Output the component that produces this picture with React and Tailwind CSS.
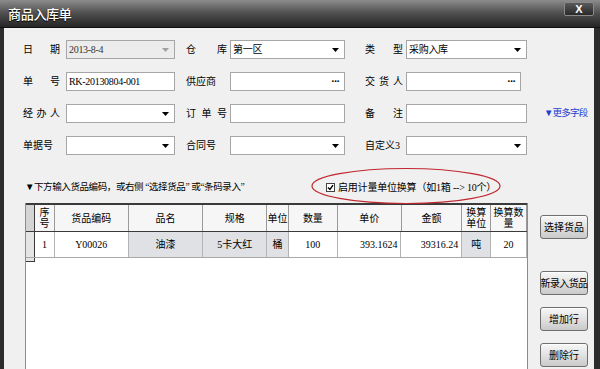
import React from 'react';

const FONT = { fontFamily: "'Liberation Serif', 'Noto Sans CJK SC', serif" };

const Arrow = ({ color = '#000' }) => (
  <svg width="7" height="4" viewBox="0 0 7 4" className="shrink-0">
    <path d="M0 0 L7 0 L3.5 4 Z" fill={color} />
  </svg>
);

const Dots = () => <span className="text-[11px] leading-none tracking-[-1px] font-bold text-black">···</span>;

const Field = ({ w, value = '', kind = 'input', disabled = false }) => (
  <div
    className={`h-[19px] flex items-center justify-between border border-[#a6a6a6] pl-[2px] pr-[5px] text-[10px] ${
      disabled ? 'bg-[#ececec] text-[#333]' : 'bg-white text-black'
    }`}
    style={{ width: w }}
  >
    <span className="whitespace-nowrap tracking-[-0.3px]">{value}</span>
    {kind === 'select' && <Arrow color={disabled ? '#a0a0a0' : '#000'} />}
    {kind === 'dots' && <Dots />}
  </div>
);

const Label = ({ text, w, spread = false }) => (
  <div
    className={`text-[10px] text-black flex whitespace-nowrap ${spread ? 'justify-between' : ''}`}
    style={{ width: w }}
  >
    {spread ? text.split('').map((c, i) => <span key={i}>{c}</span>) : text}
  </div>
);

const FormRow = ({ a, b, c, extra }) => (
  <div className="flex items-center h-[19px] pl-[19px]">
    <Label {...a.label} w={37} />
    <div className="w-[6px]" />
    <Field w={109} {...a.field} />
    <div className="w-[11px]" />
    <Label {...b.label} w={41} />
    <div className="w-[3px]" />
    <Field w={115} {...b.field} />
    <div className="w-[20px]" />
    <Label {...c.label} w={38} />
    <div className="w-[3px]" />
    <Field w={c.w || 121} {...c.field} />
    {extra}
  </div>
);

const cols = [
  { w: 9, h: '', v: '', sel: true },
  { w: 20, h: '序\n号', v: '1' },
  { w: 74, h: '货品编码', v: 'Y00026' },
  { w: 75, h: '品名', v: '油漆', gray: true },
  { w: 64, h: '规格', v: '5卡大红', gray: true },
  { w: 22, h: '单位', v: '桶', gray: true },
  { w: 49, h: '数量', v: '100' },
  { w: 64, h: '单价', v: '393.1624', right: true },
  { w: 61, h: '金额', v: '39316.24', right: true },
  { w: 29, h: '换算\n单位', v: '吨', gray: true },
  { w: 36, h: '换算数\n量', v: '20' },
];

const Btn = ({ children, className = '' }) => (
  <div
    className={`w-[48px] h-[24px] flex items-center justify-center rounded-[3px] border border-[#6f6f6f] bg-gradient-to-b from-[#f7f7f7] via-[#e2e2e2] to-[#c9c9c9] text-[10px] text-black whitespace-nowrap shadow-[inset_0_1px_0_#ffffff] ${className}`}
  >
    {children}
  </div>
);

export default function App() {
  return (
    <div className="w-[600px] h-[369px] overflow-hidden bg-[#2c2c2c] flex flex-col" style={FONT}>
      {/* title bar */}
      <div className="h-[28px] shrink-0 flex items-center justify-between pl-[8px] pr-[6px] bg-gradient-to-b from-[#8c8c8c] via-[#4e4e4e] to-[#262626] border-b border-[#111]">
        <span className="text-white text-[13px] font-medium tracking-[-0.3px] [text-shadow:0_1px_1px_#000]" style={{ fontFamily: "'Noto Sans CJK SC', sans-serif" }}>
          商品入库单
        </span>
        <div className="self-start mt-[2px] w-[30px] h-[14px] flex items-center justify-center bg-gradient-to-b from-[#5a5a5a] to-[#2a2a2a] border border-[#8a8a8a] rounded-[2px] text-white text-[11px] font-bold leading-none" style={{ fontFamily: "'Liberation Sans', sans-serif" }}>
          X
        </div>
      </div>

      {/* body */}
      <div className="flex-1 ml-[4px] mr-[6px] bg-[#f0f0f0] relative flex flex-col">
        <div className="pt-[12px] flex flex-col gap-[13px]">
          <FormRow
            a={{ label: { text: '日期', spread: true }, field: { value: '2013-8-4', kind: 'select', disabled: true } }}
            b={{ label: { text: '仓库', spread: true }, field: { value: '第一区', kind: 'select' } }}
            c={{ label: { text: '类型', spread: true }, field: { value: '采购入库', kind: 'select' } }}
          />
          <FormRow
            a={{ label: { text: '单号', spread: true }, field: { value: 'RK-20130804-001' } }}
            b={{ label: { text: '供应商' }, field: { kind: 'dots' } }}
            c={{ label: { text: '交货人', spread: true }, field: { kind: 'dots' }, w: 115 }}
          />
          <FormRow
            a={{ label: { text: '经办人', spread: true }, field: { kind: 'select' } }}
            b={{ label: { text: '订单号', spread: true }, field: {} }}
            c={{ label: { text: '备注', spread: true }, field: {} }}
            extra={<span className="ml-[17px] text-[9.5px] tracking-[-0.8px] text-[#1f3fd0] whitespace-nowrap">▼更多字段</span>}
          />
          <FormRow
            a={{ label: { text: '单据号' }, field: { kind: 'select' } }}
            b={{ label: { text: '合同号' }, field: { kind: 'select' } }}
            c={{ label: { text: '自定义3' }, field: { kind: 'select' } }}
          />
        </div>

        {/* hint row */}
        <div className="mt-[25px] flex items-center h-[14px] pl-[21px] text-[10px] text-black">
          <div className="w-[301px] whitespace-nowrap text-[9.5px] tracking-[-0.4px]">▼下方输入货品编码，或右侧 “选择货品” 或“条码录入”</div>
          <div className="w-[9px] h-[9px] border border-[#444] bg-white flex items-center justify-center">
            <svg width="7" height="7" viewBox="0 0 7 7">
              <path d="M1 3.5 L3 5.5 L6 1.2" stroke="#000" strokeWidth="1.4" fill="none" />
            </svg>
          </div>
          <span className="ml-[3px] whitespace-nowrap tracking-[-0.2px]">启用计量单位换算（如1箱 --&gt; 10个）</span>
        </div>
        <svg className="absolute left-[306px] top-[139px]" width="192" height="38" viewBox="0 0 192 38">
          <ellipse cx="96" cy="19" rx="94" ry="17.5" fill="none" stroke="#c2262e" strokeWidth="1.2" />
        </svg>

        {/* table + buttons */}
        <div className="mt-[9px] flex flex-1">
          <div className="ml-[21px] w-[503px] bg-white border-l border-r border-[#8c8c8c] flex flex-col">
            <div className="flex h-[29px] border-t-2 border-b border-[#3a3a3a] bg-[#f6f6f6]">
              {cols.map((c, i) => (
                <div
                  key={i}
                  className={`h-full flex items-center justify-center text-center whitespace-pre text-[10px] leading-[11px] text-black border-r ${
                    c.sel ? 'bg-[#d4d4d4] border-[#3a3a3a]' : 'border-[#9a9a9a]'
                  }`}
                  style={{ width: c.w }}
                >
                  {c.h}
                </div>
              ))}
            </div>
            <div className="flex h-[26px] border-b border-[#a8a8a8]">
              {cols.map((c, i) => (
                <div
                  key={i}
                  className={`h-full flex items-center text-[10px] text-black whitespace-nowrap border-r ${
                    c.right ? 'justify-end pr-[3px]' : 'justify-center'
                  } ${c.sel ? 'bg-[#e4e4e4] border-[#3a3a3a]' : 'border-[#b4b4b4]'} ${c.gray ? 'bg-[#dfe1e4]' : ''}`}
                  style={{ width: c.w }}
                >
                  {c.v}
                </div>
              ))}
            </div>
            <div className="w-[9px] h-[4px] border-r border-b border-[#3a3a3a] bg-[#e4e4e4]" />
          </div>

          <div className="ml-[12px] pt-[12px] flex flex-col">
            <Btn>选择货品</Btn>
            <Btn className="mt-[32px] tracking-[-0.6px]">新录入货品</Btn>
            <Btn className="mt-[12px]">增加行</Btn>
            <Btn className="mt-[12px]">删除行</Btn>
          </div>
        </div>
      </div>
    </div>
  );
}
